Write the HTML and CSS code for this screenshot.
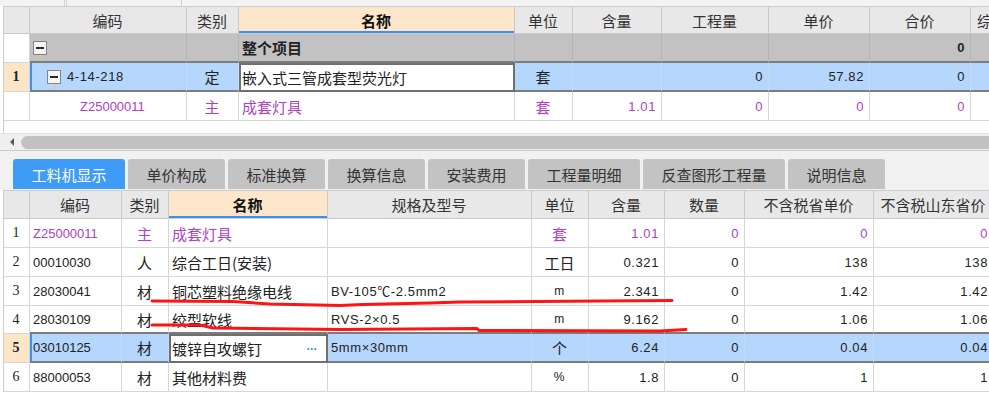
FILE: index.html
```html
<!DOCTYPE html>
<html lang="zh">
<head>
<meta charset="utf-8">
<title>工料机</title>
<link rel="stylesheet" href="styles.css">
</head>
<body>
<div class="strip"><span></span><span></span><span></span><span></span></div>

<div class="grid top">
  <div class="row head">
    <div class="c"></div>
    <div class="c m">编码</div>
    <div class="c m">类别</div>
    <div class="c m hl">名称</div>
    <div class="c m">单位</div>
    <div class="c m">含量</div>
    <div class="c m">工程量</div>
    <div class="c m">单价</div>
    <div class="c m">合价</div>
    <div class="c m">综合单价</div>
    <div class="c"></div>
  </div>
  <div class="row group pre">
    <div class="c num"></div>
    <div class="c"><span class="tb tb1"></span></div>
    <div class="c"></div>
    <div class="c b">整个项目</div>
    <div class="c"></div>
    <div class="c"></div>
    <div class="c"></div>
    <div class="c"></div>
    <div class="c r n b">0</div>
    <div class="c"></div>
    <div class="c"></div>
  </div>
  <div class="row sel">
    <div class="c num m">1</div>
    <div class="c first ind1"><span class="tb tb2"></span><span class="n code2">4-14-218</span></div>
    <div class="c m">定</div>
    <div class="c edit">嵌入式三管成套型荧光灯</div>
    <div class="c m">套</div>
    <div class="c r n"></div>
    <div class="c r n">0</div>
    <div class="c r n">57.82</div>
    <div class="c r n">0</div>
    <div class="c"></div>
    <div class="c"></div>
  </div>
  <div class="row purple">
    <div class="c num"></div>
    <div class="c code ind2">Z25000011</div>
    <div class="c m">主</div>
    <div class="c">成套灯具</div>
    <div class="c m">套</div>
    <div class="c r n">1.01</div>
    <div class="c r n">0</div>
    <div class="c r n">0</div>
    <div class="c r n">0</div>
    <div class="c"></div>
    <div class="c"></div>
  </div>
</div>

<div class="hscroll">
  <span class="arrow"></span>
  <div class="thumb"></div>
</div>

<div class="tabs">
  <div class="tab active">工料机显示</div>
  <div class="tab">单价构成</div>
  <div class="tab">标准换算</div>
  <div class="tab">换算信息</div>
  <div class="tab">安装费用</div>
  <div class="tab">工程量明细</div>
  <div class="tab">反查图形工程量</div>
  <div class="tab">说明信息</div>
</div>

<div class="grid bottom">
  <div class="row head">
    <div class="c"></div>
    <div class="c m">编码</div>
    <div class="c m">类别</div>
    <div class="c m hl">名称</div>
    <div class="c m">规格及型号</div>
    <div class="c m">单位</div>
    <div class="c m">含量</div>
    <div class="c m">数量</div>
    <div class="c m">不含税省单价</div>
    <div class="c m">不含税山东省价</div>
    <div class="c"></div>
  </div>
  <div class="row purple">
    <div class="c num m">1</div>
    <div class="c code">Z25000011</div>
    <div class="c m">主</div>
    <div class="c">成套灯具</div>
    <div class="c"></div>
    <div class="c m">套</div>
    <div class="c r n">1.01</div>
    <div class="c r n">0</div>
    <div class="c r n">0</div>
    <div class="c r n">0</div>
    <div class="c"></div>
  </div>
  <div class="row">
    <div class="c num m">2</div>
    <div class="c code">00010030</div>
    <div class="c m">人</div>
    <div class="c">综合工日(安装)</div>
    <div class="c"></div>
    <div class="c m">工日</div>
    <div class="c r n">0.321</div>
    <div class="c r n">0</div>
    <div class="c r n">138</div>
    <div class="c r n">138</div>
    <div class="c"></div>
  </div>
  <div class="row">
    <div class="c num m">3</div>
    <div class="c code">28030041</div>
    <div class="c m">材</div>
    <div class="c">铜芯塑料绝缘电线</div>
    <div class="c n">BV-105℃-2.5mm2</div>
    <div class="c m n sm">m</div>
    <div class="c r n">2.341</div>
    <div class="c r n">0</div>
    <div class="c r n">1.42</div>
    <div class="c r n">1.42</div>
    <div class="c"></div>
  </div>
  <div class="row pre short">
    <div class="c num m">4</div>
    <div class="c code">28030109</div>
    <div class="c m">材</div>
    <div class="c">绞型软线</div>
    <div class="c n">RVS-2×0.5</div>
    <div class="c m n sm">m</div>
    <div class="c r n">9.162</div>
    <div class="c r n">0</div>
    <div class="c r n">1.06</div>
    <div class="c r n">1.06</div>
    <div class="c"></div>
  </div>
  <div class="row sel">
    <div class="c num m">5</div>
    <div class="c code first">03010125</div>
    <div class="c m">材</div>
    <div class="c edit">镀锌自攻螺钉<span class="dots">···</span></div>
    <div class="c n">5mm×30mm</div>
    <div class="c m">个</div>
    <div class="c r n">6.24</div>
    <div class="c r n">0</div>
    <div class="c r n">0.04</div>
    <div class="c r n">0.04</div>
    <div class="c"></div>
  </div>
  <div class="row">
    <div class="c num m">6</div>
    <div class="c code">88000053</div>
    <div class="c m">材</div>
    <div class="c">其他材料费</div>
    <div class="c"></div>
    <div class="c m n sm">%</div>
    <div class="c r n">1.8</div>
    <div class="c r n">0</div>
    <div class="c r n">1</div>
    <div class="c r n">1</div>
    <div class="c"></div>
  </div>
</div>

<svg class="marks" width="989" height="417" viewBox="0 0 989 417">
  <polyline points="152,301 233,301.5 270,304 340,305.5 363,304.5 430,303 460,302 600,301 672,300.5" />
  <polyline points="152,325 200,325 213,328 340,329.5 477,328.5 479,330.5 660,331 686,329.5" />
</svg>
</body>
</html>
```

FILE: styles.css
```css
html, body {
  margin: 0;
  padding: 0;
}

body {
  width: 989px;
  height: 417px;
  overflow: hidden;
  position: relative;
  background: #ffffff;
  font-family: "Noto Sans CJK SC", "Noto Sans", sans-serif;
  font-size: 15px;
  color: #222222;
}

/* top strip (remnant of previous pane) */
.strip {
  height: 6px;
  background: #f3f3f3;
  display: grid;
  grid-template-columns: 65px 2px 115px 1fr;
}
.strip span {
  border-right: 1px solid #d2d2d2;
}
.strip span:last-child {
  border-right: none;
}

/* grids */
.grid {
  margin-left: 3px;
  border-left: 1px solid #cdcdcd;
  border-top: 1px solid #cdcdcd;
  overflow: hidden;
}
.top {
  --cols: 26px 157px 52px 276px 58px 89px 107px 101px 101px 74px 100px;
  height: 126px;
}
.bottom {
  --cols: 26px 92px 47px 159px 204px 57px 76px 80px 129px 120px 60px;
}

.row {
  display: grid;
  grid-template-columns: var(--cols);
  width: max-content;
}

.c {
  box-sizing: border-box;
  height: 29px;
  display: flex;
  align-items: center;
  padding: 0 5px 0 3px;
  border-right: 1px solid #d6d6d6;
  border-bottom: 1px solid #d6d6d6;
  white-space: nowrap;
  overflow: hidden;
  line-height: 1;
}
.c.m { justify-content: center; padding: 0 1px 0 0; }
.c.r { justify-content: flex-end; }
.b { font-weight: bold; }

.n {
  font-family: "Liberation Sans", "Noto Sans CJK SC", sans-serif;
  font-size: 13px;
  letter-spacing: 0.6px;
}
.sm { font-size: 12px; }
.code {
  font-family: "Liberation Sans", sans-serif;
  font-size: 13px;
}

.num {
  font-family: "Liberation Serif", serif;
  font-size: 14px;
  color: #222;
}

/* header */
.head .c {
  background: #e8e8e8;
  border-right-color: #cacaca;
  border-bottom-color: #cacaca;
  color: #333;
}
.top .head .c { height: 27px; }
.bottom .head .c { height: 28px; }
.head .hl {
  background: #fde6c9;
  font-weight: bold;
  color: #111;
  box-shadow: inset 0 -2px 0 #3d8ff0;
}

/* group row */
.group .c {
  background: #c2c2c2;
  border-right-color: #b4b4b4;
}
.group .c.num {
  background: #ffffff;
  border-right-color: #d6d6d6;
}

/* thick separators around the selected row */
.pre .c:not(.num),
.sel .c:not(.num) {
  border-bottom: 2px solid #7c7c7c;
}

.short .c { height: 28px; }

.sel .c {
  background: #b5d6fd;
  border-right-color: #c9daee;
}
.sel .c.num {
  background: #fde5c8;
  font-weight: bold;
  border-right-color: #d6d6d6;
}
.sel .first {
  box-shadow: inset 2px 0 0 #3d8ff0;
}
.sel .c.edit {
  background: #ffffff;
  border: 2px solid #6f6f6f;
  padding-left: 1px;
  justify-content: space-between;
}
.dots {
  color: #4a8ee0;
  font-family: "Liberation Sans", sans-serif;
  font-size: 12px;
  letter-spacing: -0.5px;
  font-weight: bold;
  padding-right: 4px;
}

.purple .c { color: #b140c3; }
.purple .c.num { color: #222; }

/* tree */
.ind1 { padding-left: 17px; }
.ind2 { padding-left: 50px; }
.code2 { margin-left: 6px; }

.tb {
  position: relative;
  display: inline-block;
  box-sizing: border-box;
  width: 14px;
  height: 14px;
  border: 1px solid #868686;
  background: #f5f5f5;
  flex: none;
}
.tb::before {
  content: "";
  position: absolute;
  left: 2px;
  right: 2px;
  top: 5px;
  height: 2px;
  background: #2a2a2a;
}
.tb::after {
  content: "";
  position: absolute;
  left: 7px;
  top: 13px;
  box-sizing: border-box;
  border-left: 1px solid #f6c07e;
  border-bottom: 1px solid #f6c07e;
}
.tb1::after { width: 7px; height: 22px; }
.tb2::after { width: 24px; height: 23px; }

/* horizontal scrollbar */
.hscroll {
  height: 18px;
  box-sizing: border-box;
  border-top: 1px solid #e2e2e2;
  border-bottom: 1px solid #c9c9c9;
  background: #efefef;
  display: flex;
  align-items: center;
  padding-left: 10px;
  gap: 7px;
}
.arrow {
  width: 0;
  height: 0;
  border-top: 4px solid transparent;
  border-bottom: 4px solid transparent;
  border-right: 4px solid #5a5a5a;
}
.thumb {
  flex: 1;
  height: 13px;
  background: #c1c1c1;
  border-radius: 7px 0 0 7px;
}

/* tabs */
.tabs {
  height: 39px;
  box-sizing: border-box;
  background: #f1f1f1;
  display: flex;
  align-items: flex-end;
  gap: 3px;
  padding: 0 0 1px 13px;
}
.tab {
  height: 30px;
  box-sizing: border-box;
  padding: 0 18.5px;
  display: flex;
  align-items: center;
  background: #c3c3c3;
  color: #333;
  border-radius: 3px 3px 0 0;
  line-height: 1;
}
.tab.active {
  background: #3e9bf6;
  color: #ffffff;
}

/* red hand-drawn marks */
.marks {
  position: absolute;
  left: 0;
  top: 0;
  pointer-events: none;
}
.marks polyline {
  fill: none;
  stroke: #ff1414;
  stroke-width: 3;
  stroke-linecap: round;
  stroke-linejoin: round;
}
```
